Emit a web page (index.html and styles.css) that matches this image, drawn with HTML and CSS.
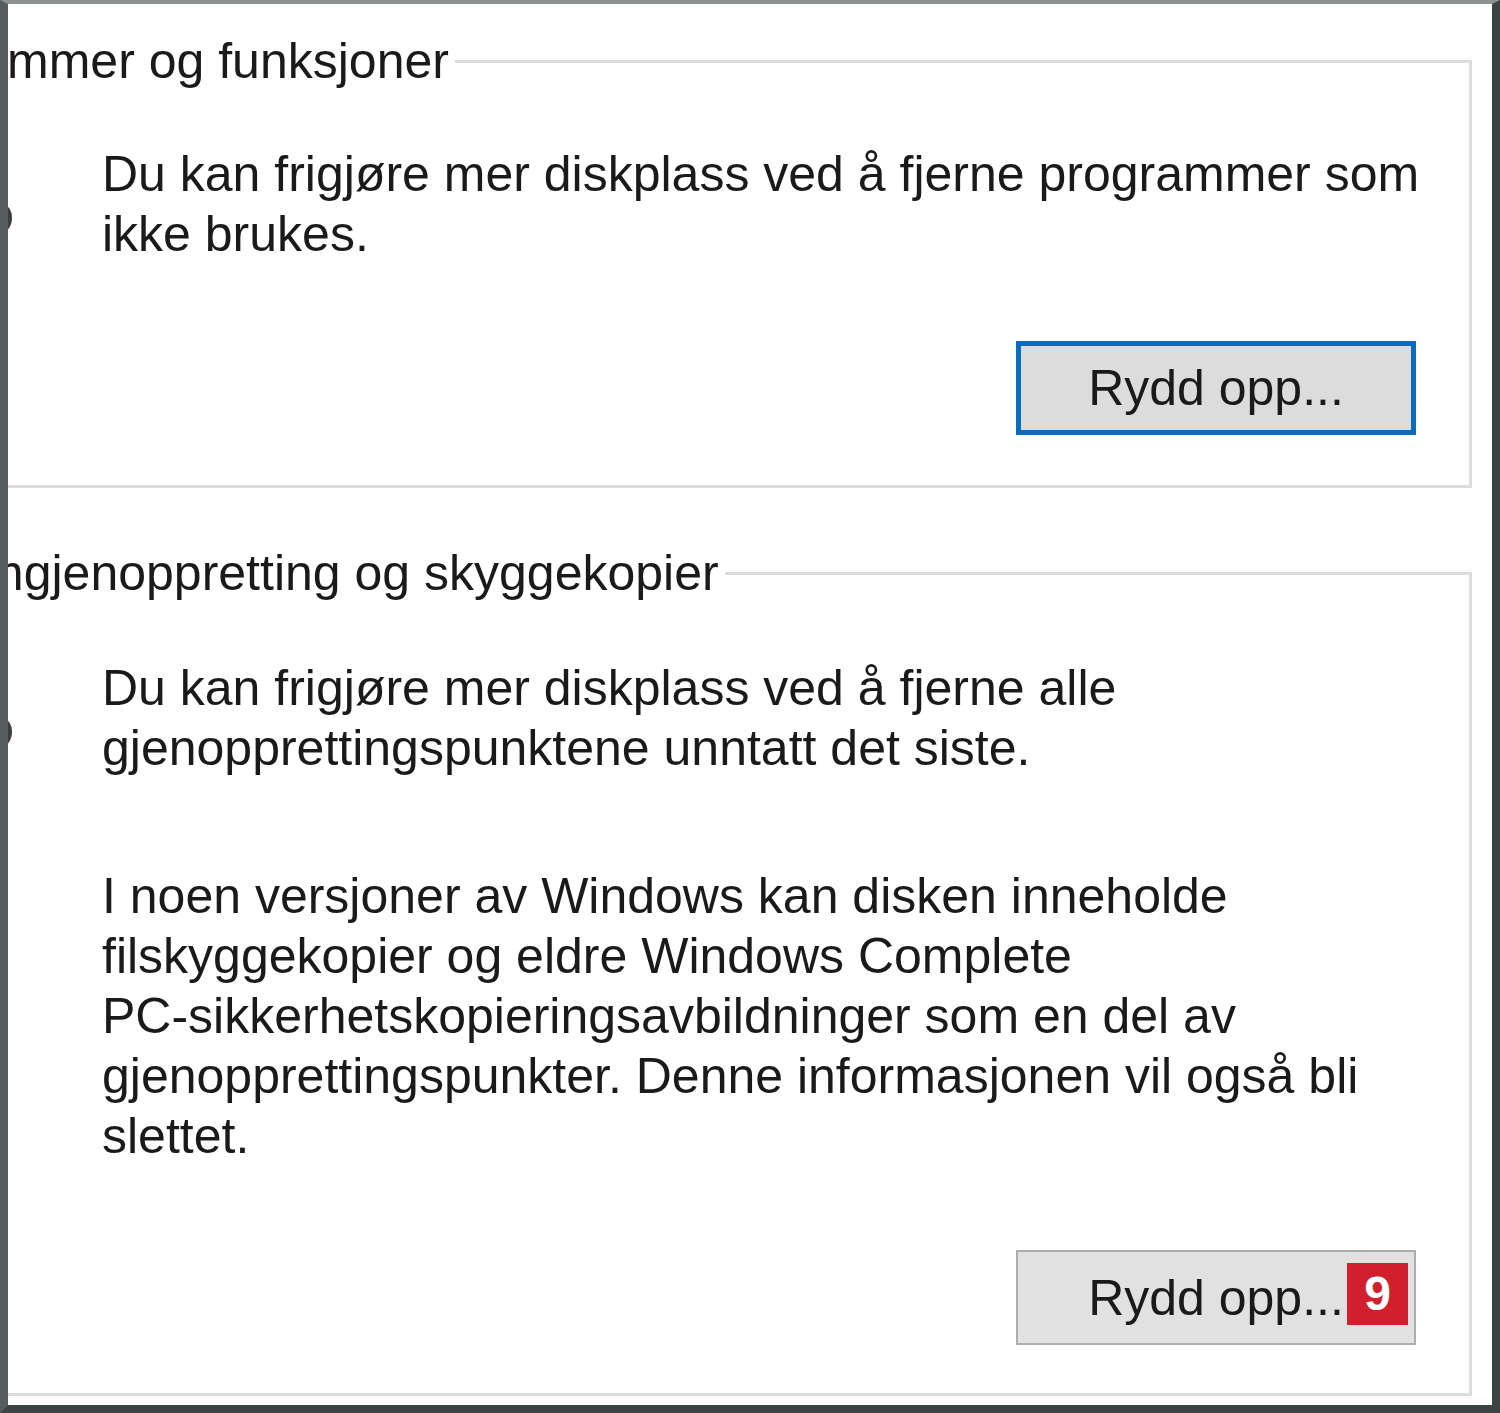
FILE: index.html
```html
<!DOCTYPE html>
<html lang="no">
<head>
  <meta charset="UTF-8">
  <meta name="viewport" content="width=device-width, initial-scale=1.0">
  <title>Diskopprydding - Flere alternativer</title>
  <link rel="stylesheet" href="styles.css">
</head>
<body>
  <div class="window">
    <fieldset class="group group-programs">
      <legend>Programmer og funksjoner</legend>
      <div class="group-row">
        <svg class="group-icon" viewBox="0 0 64 100" aria-hidden="true">
          <rect x="4" y="50" width="40" height="48" rx="4" fill="#6b8fb3"/>
          <ellipse cx="54" cy="74" rx="10" ry="14" fill="#3b3f40"/>
        </svg>
        <div class="group-body">
          <p>Du kan frigjøre mer diskplass ved å fjerne programmer som ikke brukes.</p>
          <button type="button" class="btn btn-default">Rydd opp...</button>
        </div>
      </div>
    </fieldset>

    <fieldset class="group group-restore">
      <legend>Systemgjenoppretting og skyggekopier</legend>
      <div class="group-row">
        <svg class="group-icon" viewBox="0 0 64 100" aria-hidden="true">
          <circle cx="24" cy="74" r="20" fill="#5c88b8"/>
          <ellipse cx="54" cy="74" rx="10" ry="14" fill="#3b3f40"/>
        </svg>
        <div class="group-body">
          <p>Du kan frigjøre mer diskplass ved å fjerne alle gjenopprettingspunktene unntatt det siste.</p>
          <p class="note">I noen versjoner av Windows kan disken inneholde filskyggekopier og eldre Windows Complete <span class="nowrap">PC-sikkerhetskopieringsavbildninger</span> som en del av gjenopprettingspunkter. Denne informasjonen vil også bli slettet.</p>
          <button type="button" class="btn">Rydd opp...<span class="step-badge">9</span></button>
        </div>
      </div>
    </fieldset>
  </div>
</body>
</html>
```

FILE: styles.css
```css
/* General Styles */
body {
  margin: 0;
  padding: 0;
  font-family: "Liberation Sans", Arial, sans-serif;
  background: #fff;
}

.window {
  height: 1413px;
  box-sizing: border-box;
  border-top: 4px solid #8e9191;
  border-left: 8px solid #575c5c;
  border-right: 8px solid #3d4242;
  border-bottom: 8px solid #3d4242;
  overflow: hidden;
  background: #fff;
  color: #1a1a1a;
  font-size: 50px;
  line-height: 60px;
}

/* Group boxes */
.group {
  min-width: 0;
  margin: 27px 20px 0 -191px;
  padding: 53px 25px 50px 128px;
  border: 3px solid #dcdcdc;
}
.group legend {
  margin-left: -97px;
  padding: 0 6px;
}
.group-restore {
  margin-top: 55px;
  padding-top: 55px;
  padding-bottom: 48px;
}

.group-row {
  display: flex;
  gap: 90px;
}
.group-icon {
  flex: none;
  width: 64px;
  height: 100px;
}
.group-body {
  flex: 1;
  display: flex;
  flex-direction: column;
}
.group-body p {
  margin: 0;
}
.group-body .note {
  margin-top: 88px;
}
.nowrap {
  white-space: nowrap;
}

/* Buttons */
.btn {
  position: relative;
  align-self: flex-end;
  width: 400px;
  height: 95px;
  margin: 84px 28px 0 0;
  padding: 0;
  font: inherit;
  color: #1a1a1a;
  background: #e1e1e1;
  border: 2px solid #adadad;
}
.btn-default {
  height: 94px;
  margin-top: 77px;
  background: #dcdcdc;
  border: 5px solid #0b6cbd;
}

.step-badge {
  position: absolute;
  top: 11px;
  right: 6px;
  width: 61px;
  height: 62px;
  background: #d11f2e;
  color: #fff;
  font-weight: bold;
  font-size: 48px;
  line-height: 62px;
  text-align: center;
}
```
